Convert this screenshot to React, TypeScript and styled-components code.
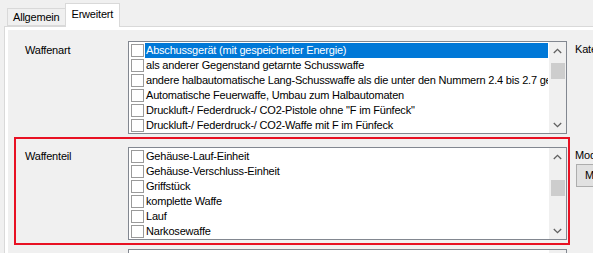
import React from "react";
import styled, { createGlobalStyle } from "styled-components";

type Item = { label: string; checked?: boolean };

const waffenarten: Item[] = [
  { label: "Abschussgerät (mit gespeicherter Energie)" },
  { label: "als anderer Gegenstand getarnte Schusswaffe" },
  { label: "andere halbautomatische Lang-Schusswaffe als die unter den Nummern 2.4 bis 2.7 genannten" },
  { label: "Automatische Feuerwaffe, Umbau zum Halbautomaten" },
  { label: "Druckluft-/ Federdruck-/ CO2-Pistole ohne \"F im Fünfeck\"" },
  { label: "Druckluft-/ Federdruck-/ CO2-Waffe mit F im Fünfeck" },
];

const waffenteile: Item[] = [
  { label: "Gehäuse-Lauf-Einheit" },
  { label: "Gehäuse-Verschluss-Einheit" },
  { label: "Griffstück" },
  { label: "komplette Waffe" },
  { label: "Lauf" },
  { label: "Narkosewaffe" },
];

const Global = createGlobalStyle`
  html, body {
    margin: 0;
    padding: 0;
    background: #f0f0f0;
    overflow: hidden;
  }
  body {
    font-family: "Liberation Sans", Arial, sans-serif;
    font-size: 11px;
    letter-spacing: -0.2px;
    color: #000;
  }
`;

const Window = styled.div`
  width: 593px;
  height: 253px;
  overflow: hidden;
`;

const TabStrip = styled.div`
  position: relative;
  z-index: 1;
  display: flex;
  align-items: flex-end;
  height: 27px;
  padding-left: 7px;
`;

const Tab = styled.div<{ $active?: boolean }>`
  box-sizing: border-box;
  display: flex;
  align-items: center;
  justify-content: center;
  border: 1px solid #d9d9d9;
  border-bottom: ${(p) => (p.$active ? "none" : "1px solid #d9d9d9")};
  margin-left: ${(p) => (p.$active ? "-1px" : "0")};
  margin-bottom: ${(p) => (p.$active ? "0" : "1px")};
  height: ${(p) => (p.$active ? "24px" : "18px")};
  padding: ${(p) => (p.$active ? "0 6px 3px" : "0 5px")};
  background: ${(p) => (p.$active ? "#fff" : "#f0f0f0")};
`;

const TabPage = styled.div`
  margin: -1px 0 0 4px;
  border-top: 1px solid #d9d9d9;
  border-left: 1px solid #d9d9d9;
  background: #fff;
  padding: 3px 0 0 3px;
`;

const Panel = styled.div`
  background: #f0f0f0;
  padding: 1px 0 40px 6px;
`;

const FieldLine = styled.div`
  display: flex;
  align-items: flex-start;
`;

const FieldBox = styled.div<{ $highlight?: boolean; $top: number; $bottom: number }>`
  box-sizing: border-box;
  flex: none;
  width: 556px;
  display: grid;
  grid-template-columns: 103px 439px;
  border: 2px solid ${(p) => (p.$highlight ? "#e81123" : "transparent")};
  padding: ${(p) => `${p.$top}px 0 ${p.$bottom}px 9px`};
`;

const FieldLabel = styled.div`
  padding-top: 3px;
  line-height: 13px;
`;

const SideField = styled.div`
  margin-left: 5px;
  padding-top: 12px;
  display: flex;
  flex-direction: column;
  gap: 3px;
  white-space: nowrap;
`;

const SideButton = styled.div`
  box-sizing: border-box;
  width: 60px;
  height: 23px;
  margin-left: 1px;
  border: 1px solid #adadad;
  background: #e1e1e1;
  padding: 4px 0 0 8px;
`;

const ListBox = styled.div<{ $height: number }>`
  box-sizing: border-box;
  position: relative;
  height: ${(p) => p.$height}px;
  border: 1px solid #828790;
  background: #fff;
  padding: 1px 18px 1px 1px;
  overflow: hidden;
`;

const ListRow = styled.div`
  display: flex;
  align-items: center;
  height: 15px;
  white-space: nowrap;
`;

const CheckBox = styled.span`
  box-sizing: border-box;
  flex: none;
  width: 13px;
  height: 13px;
  margin-left: 1px;
  border: 1px solid #9a9a9a;
  background: #fff;
`;

const ItemText = styled.span<{ $selected?: boolean }>`
  flex: 1;
  min-width: 0;
  height: 15px;
  line-height: 15px;
  margin-left: 1px;
  padding-left: 1px;
  overflow: hidden;
  background: ${(p) => (p.$selected ? "#0078d7" : "transparent")};
  color: ${(p) => (p.$selected ? "#fff" : "#000")};
`;

const ScrollBar = styled.div`
  position: absolute;
  top: 0;
  right: 0;
  bottom: 0;
  width: 17px;
  background: #f0f0f0;
  display: flex;
  flex-direction: column;
  justify-content: space-between;
`;

const ScrollArrow = styled.div`
  height: 17px;
  display: flex;
  align-items: center;
  justify-content: center;
`;

const ScrollThumb = styled.div`
  position: absolute;
  left: 2px;
  right: 1px;
  background: #cdcdcd;
`;

const Chevron = ({ up }: { up?: boolean }) => (
  <svg width="9" height="6" viewBox="0 0 9 6">
    <path
      d={up ? "M0.8 5 L4.5 1.3 L8.2 5" : "M0.8 1 L4.5 4.7 L8.2 1"}
      fill="none"
      stroke="#606060"
      strokeWidth="1.3"
    />
  </svg>
);

const CheckedList = ({
  items,
  selected,
  thumbTop,
}: {
  items: Item[];
  selected?: number;
  thumbTop: number;
}) => (
  <ListBox $height={93}>
    {items.map((item, i) => (
      <ListRow key={item.label}>
        <CheckBox />
        <ItemText $selected={i === selected}>{item.label}</ItemText>
      </ListRow>
    ))}
    <ScrollBar>
      <ScrollArrow>
        <Chevron up />
      </ScrollArrow>
      <ScrollThumb style={{ top: thumbTop, height: 16 }} />
      <ScrollArrow>
        <Chevron />
      </ScrollArrow>
    </ScrollBar>
  </ListBox>
);

export default function App() {
  return (
    <Window>
      <Global />
      <TabStrip>
        <Tab>Allgemein</Tab>
        <Tab $active>Erweitert</Tab>
      </TabStrip>
      <TabPage>
        <Panel>
          <FieldLine>
            <FieldBox $top={8} $bottom={1}>
              <FieldLabel>Waffenart</FieldLabel>
              <CheckedList items={waffenarten} selected={0} thumbTop={21} />
            </FieldBox>
            <SideField>Kategorie</SideField>
          </FieldLine>
          <FieldLine>
            <FieldBox $highlight $top={8} $bottom={3}>
              <FieldLabel>Waffenteil</FieldLabel>
              <CheckedList items={waffenteile} thumbTop={32} />
            </FieldBox>
            <SideField>
              Modell
              <SideButton>Modell wählen</SideButton>
            </SideField>
          </FieldLine>
          <FieldLine>
            <FieldBox $top={2} $bottom={1}>
              <FieldLabel>Kaliber</FieldLabel>
              <CheckedList items={[]} thumbTop={20} />
            </FieldBox>
          </FieldLine>
        </Panel>
      </TabPage>
    </Window>
  );
}
